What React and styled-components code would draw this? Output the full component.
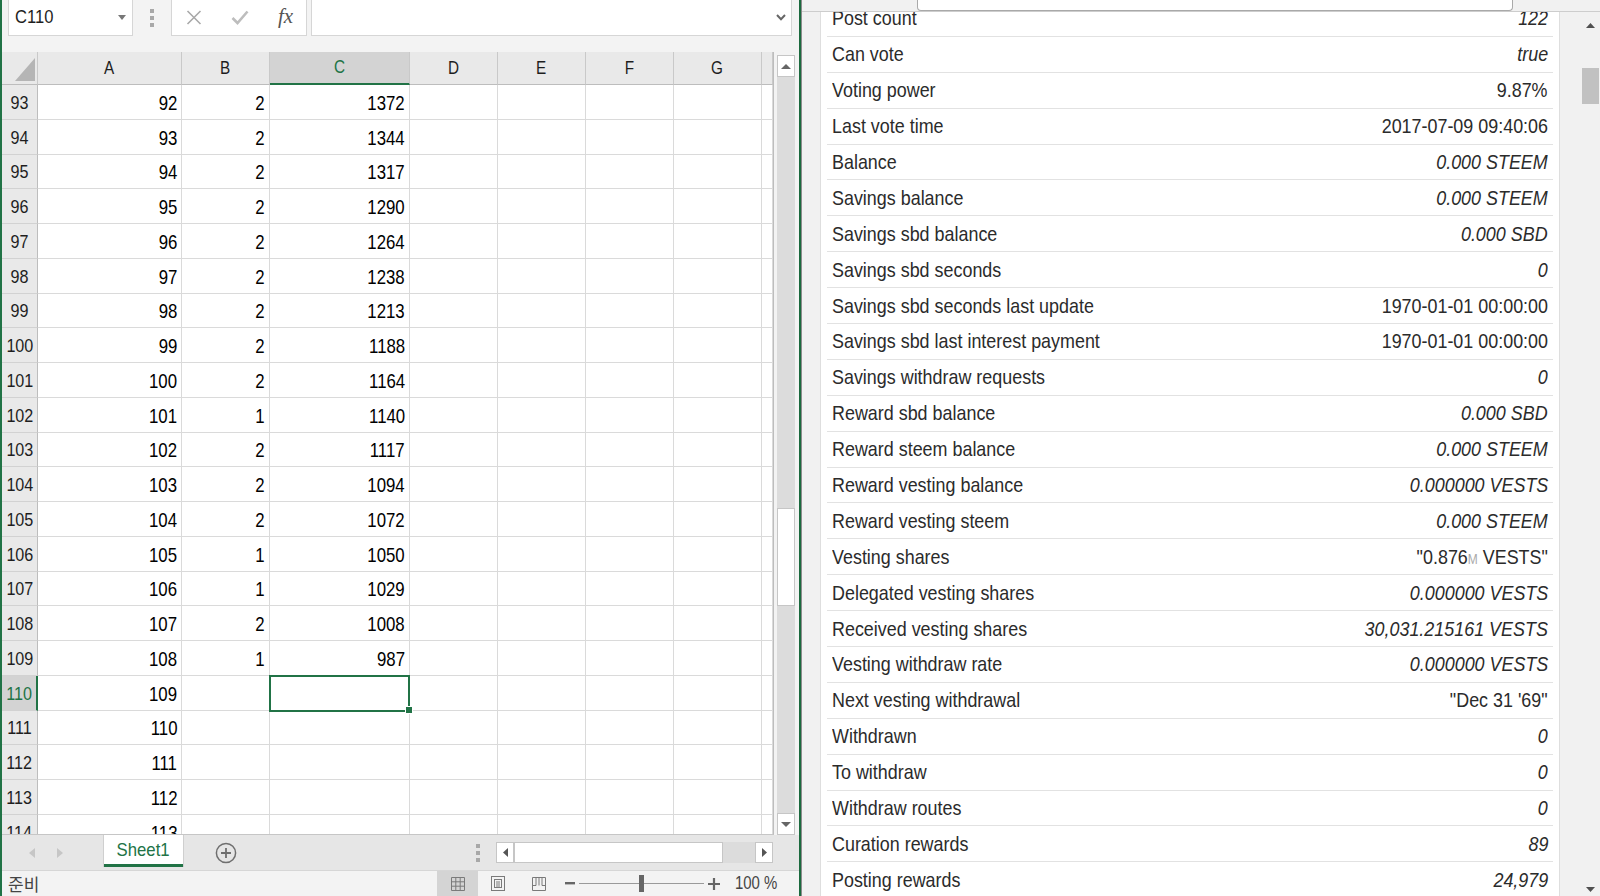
import React, { useLayoutEffect, useRef } from "react";
import styled, { createGlobalStyle, css } from "styled-components";

const GREEN = "#217346";
const SANS = `"Liberation Sans", Arial, sans-serif`;

const GlobalStyle = createGlobalStyle`
  html, body { margin: 0; padding: 0; }
  body { width: 1600px; height: 896px; overflow: hidden; background: #f3f3f3; }
`;

const Screen = styled.div`
  display: flex;
  width: 1600px;
  height: 896px;
  overflow: hidden;
  font-family: ${SANS};
`;

/* the captured screen is horizontally squeezed, so glyphs are narrowed */
const Squeeze = styled.span`
  display: inline-block;
  white-space: nowrap;
  transform: scaleX(${(p) => p.$k || 0.85});
  transform-origin: ${(p) => p.$origin || "center"};
`;

/* ---------- Excel side ---------- */
const Excel = styled.div`
  width: 801px;
  flex: none;
  box-sizing: border-box;
  border-left: 2px solid ${GREEN};
  border-right: 2px solid #1b6a3e;
  display: flex;
  flex-direction: column;
  background: #f3f3f3;
`;

const FormulaBar = styled.div`
  height: 52px;
  flex: none;
  display: flex;
  align-items: flex-start;
  padding-left: 6px;
`;

const Field = styled.div`
  height: 36px;
  box-sizing: border-box;
  background: #fff;
  border: 1px solid #d6d6d6;
  border-top: none;
  display: flex;
  align-items: center;
`;

const NameBox = styled(Field)`
  width: 125px;
  padding: 0 6px;
  justify-content: space-between;
  font-size: 18px;
  color: #1e1e1e;
`;

const Grip = styled.div`
  width: ${(p) => p.$w || 38}px;
  height: ${(p) => p.$h || 36}px;
  display: flex;
  align-items: center;
  justify-content: center;
  flex: none;
`;

const FxBox = styled(Field)`
  width: 136px;
  display: grid;
  grid-template-columns: 44px 47px 45px;
  justify-items: center;
`;

const FxText = styled.span`
  font-family: "Liberation Serif", serif;
  font-style: italic;
  font-size: 21px;
  color: #555;
  line-height: 1;
  margin-top: -2px;
`;

const FormulaInput = styled(Field)`
  width: 481px;
  margin-left: 4px;
  justify-content: flex-end;
  padding-right: 5px;
`;

const MainRow = styled.div`
  flex: 1;
  display: flex;
  min-height: 0;
`;

const Sheet = styled.div`
  width: 772px;
  flex: none;
  box-sizing: border-box;
  border-right: 1px solid #bdbdbd;
  border-bottom: 1px solid #c6c6c6;
  display: flex;
  flex-direction: column;
  background: #fff;
  overflow: hidden;
`;

const COLS = "36px 144px 88px 140px 88px 88px 88px 88px 1fr";

const HeadRow = styled.div`
  display: grid;
  grid-template-columns: ${COLS};
  height: 33px;
  flex: none;
  background: #e9e9e9;
`;

const ColHead = styled.div`
  box-sizing: border-box;
  border-right: 1px solid #c9c9c9;
  border-bottom: ${(p) => (p.$active ? `2px solid ${GREEN}` : "1px solid #bdbdbd")};
  background: ${(p) => (p.$active ? "#d3d3d3" : "#e9e9e9")};
  color: ${(p) => (p.$active ? GREEN : "#1e1e1e")};
  display: flex;
  align-items: center;
  justify-content: center;
  font-size: 18px;
`;

const Corner = styled(ColHead)`
  align-items: flex-end;
  justify-content: flex-end;
  padding: 0 2px 3px 0;
`;

const Body = styled.div`
  flex: 1;
  display: grid;
  grid-template-columns: ${COLS};
  grid-auto-rows: 34.75px;
  align-content: start;
  overflow: hidden;
`;

const RowHead = styled.div`
  box-sizing: border-box;
  border-right: ${(p) => (p.$active ? `2px solid ${GREEN}` : "1px solid #bdbdbd")};
  border-bottom: 1px solid #d2d2d2;
  background: ${(p) => (p.$active ? "#d3d3d3" : "#e9e9e9")};
  color: ${(p) => (p.$active ? GREEN : "#1e1e1e")};
  display: flex;
  align-items: center;
  justify-content: center;
  font-size: 19px;
  padding-top: 2px;
`;

const Cell = styled.div`
  position: relative;
  box-sizing: border-box;
  border-right: 1px solid #dadada;
  border-bottom: 1px solid #dadada;
  display: flex;
  align-items: center;
  justify-content: flex-end;
  padding: 2px 4px 0 0;
  font-size: 21px;
  color: #000;
  ${(p) =>
    p.$selected &&
    css`
      z-index: 1;
      &::after {
        content: "";
        position: absolute;
        left: -1px;
        top: -1px;
        right: -1px;
        bottom: -2px;
        border: 2px solid ${GREEN};
      }
      &::before {
        content: "";
        position: absolute;
        right: -4px;
        bottom: -4px;
        width: 6px;
        height: 6px;
        background: ${GREEN};
        border: 1px solid #fff;
        z-index: 2;
      }
    `}
`;

const VScroll = styled.div`
  width: 25px;
  flex: none;
  box-sizing: border-box;
  padding: 3px 4px 0 3px;
  display: flex;
  flex-direction: column;
`;

const ScrollBtn = styled.div`
  flex: none;
  width: ${(p) => p.$w || 18}px;
  height: ${(p) => p.$h || 22}px;
  box-sizing: border-box;
  background: #fff;
  border: 1px solid #c6c6c6;
  display: flex;
  align-items: center;
  justify-content: center;
`;

const VTrack = styled.div`
  flex: 1;
  background: #dcdcdc;
`;

const VThumb = styled.div`
  height: 98px;
  box-sizing: border-box;
  background: #fff;
  border: 1px solid #c6c6c6;
`;

const TabBar = styled.div`
  height: 35px;
  flex: none;
  display: flex;
  align-items: center;
  background: #e6e6e6;
`;

const TabNav = styled.div`
  width: 102px;
  flex: none;
  display: flex;
  align-items: center;
  padding-left: 27px;
  gap: 22px;
  box-sizing: border-box;
`;

const Tab = styled.div`
  width: 79px;
  height: 32px;
  flex: none;
  align-self: flex-start;
  box-sizing: border-box;
  background: #fff;
  border-bottom: 3px solid ${GREEN};
  box-shadow: -1px 0 0 #cfcfcf, 1px 0 0 #cfcfcf;
  color: ${GREEN};
  font-size: 19px;
  display: flex;
  align-items: center;
  justify-content: center;
  padding-top: 1px;
`;

const AddArea = styled.div`
  width: 86px;
  flex: none;
  display: flex;
  justify-content: center;
`;

const Spacer = styled.div`
  flex: 1;
`;

const HScroll = styled.div`
  width: 277px;
  height: 21px;
  flex: none;
  margin: 0 26px 0 9px;
  display: flex;
  background: #dcdcdc;
`;

const HThumb = styled.div`
  width: 209px;
  flex: none;
  box-sizing: border-box;
  background: #fff;
  border: 1px solid #c6c6c6;
  margin-right: auto;
`;

const StatusBar = styled.div`
  height: 26px;
  flex: none;
  box-sizing: border-box;
  border-top: 1px solid #d6d6d6;
  display: flex;
  align-items: stretch;
  background: #f3f3f3;
  padding-right: 22px;
  font-size: 18px;
  color: #444;
`;

const Ready = styled.div`
  padding-left: 6px;
  display: flex;
  align-items: center;
  font-family: "Noto Sans CJK KR", "Noto Sans", sans-serif;
  font-size: 17px;
  color: #444;
  margin-right: auto;
`;

const ViewBtn = styled.div`
  width: ${(p) => p.$w}px;
  flex: none;
  display: flex;
  align-items: center;
  justify-content: center;
  background: ${(p) => (p.$active ? "#d4d4d4" : "transparent")};
`;

const ZoomSlider = styled.div`
  display: flex;
  align-items: center;
  gap: 4px;
  margin-left: 6px;
`;

const SliderLine = styled.div`
  position: relative;
  width: 125px;
  height: 1px;
  background: #9a9a9a;
`;

const SliderKnob = styled.div`
  position: absolute;
  left: 60px;
  top: -8px;
  width: 5px;
  height: 17px;
  background: #666;
`;

const ZoomText = styled.div`
  width: 42px;
  margin-left: 15px;
  display: flex;
  align-items: center;
  white-space: nowrap;
  color: #444;
`;

/* ---------- Browser side ---------- */
const Browser = styled.div`
  flex: 1;
  display: flex;
  flex-direction: column;
  border-left: 1px solid #8c8c8c;
  background: #f1f1f1;
  color: #2b2b2b;
`;

const TopBar = styled.div`
  height: 12px;
  flex: none;
  box-sizing: border-box;
  border-bottom: 1px solid #cdcdcd;
  display: flex;
`;

const AddressField = styled.div`
  width: 596px;
  height: 11px;
  margin-left: 115px;
  box-sizing: border-box;
  background: #fff;
  border: 1px solid #a9a9a9;
  border-top: none;
  border-radius: 0 0 4px 4px;
`;

const BrowserBody = styled.div`
  flex: 1;
  display: flex;
  min-height: 0;
`;

const LeftStrip = styled.div`
  width: 19px;
  flex: none;
  box-sizing: border-box;
  border-right: 1px solid #dedede;
`;

const Content = styled.div`
  flex: 1;
  background: #fff;
  overflow: hidden;
  padding: 0 6px;
`;

const InfoRow = styled.div`
  height: 35.9px;
  box-sizing: border-box;
  border-top: 1px solid #e2e2e2;
  padding: 0 5px;
  display: flex;
  align-items: center;
  justify-content: space-between;
  font-size: 21px;
  white-space: nowrap;
`;

const Value = styled(Squeeze)`
  font-style: ${(p) => (p.$italic ? "italic" : "normal")};
`;

const Unit = styled.span`
  font-size: 14px;
  color: #aaa;
`;

const RightBar = styled.div`
  width: 41px;
  flex: none;
  box-sizing: border-box;
  border-left: 1px solid #dedede;
  display: flex;
  justify-content: flex-end;
`;

const PageScroll = styled.div`
  width: 20px;
  display: flex;
  flex-direction: column;
  align-items: center;
  padding: 0 1px;
  box-sizing: border-box;
`;

const PageArrow = styled.div`
  height: ${(p) => p.$h}px;
  flex: none;
  display: flex;
  align-items: center;
  justify-content: center;
`;

const PageThumb = styled.div`
  width: 17px;
  height: 36px;
  margin-top: 29px;
  background: #c1c1c1;
`;

/* ---------- icons ---------- */
const Tri = ({ dir = "down", w = 8, h = 5, color = "#666" }) => {
  const pts = {
    down: `0,0 ${w},0 ${w / 2},${h}`,
    up: `0,${h} ${w},${h} ${w / 2},0`,
    left: `${w},0 ${w},${h} 0,${h / 2}`,
    right: `0,0 0,${h} ${w},${h / 2}`,
  }[dir];
  return (
    <svg width={w} height={h} viewBox={`0 0 ${w} ${h}`}>
      <polygon points={pts} fill={color} />
    </svg>
  );
};

const Dots = () => (
  <svg width="4" height="18" viewBox="0 0 4 18">
    <rect x="0" y="0" width="4" height="4" fill="#a8a8a8" />
    <rect x="0" y="7" width="4" height="4" fill="#a8a8a8" />
    <rect x="0" y="14" width="4" height="4" fill="#a8a8a8" />
  </svg>
);

const rows = [];
const bCol = [2, 2, 2, 2, 2, 2, 2, 2, 2, 1, 2, 2, 2, 1, 1, 2, 1];
const cCol = [1372, 1344, 1317, 1290, 1264, 1238, 1213, 1188, 1164, 1140, 1117, 1094, 1072, 1050, 1029, 1008, 987];
for (let r = 93; r <= 114; r++) {
  const i = r - 93;
  rows.push({ n: r, a: r - 1, b: bCol[i] ?? "", c: cCol[i] ?? "" });
}

const info = [
  ["Post count", "122", true],
  ["Can vote", "true", true],
  ["Voting power", "9.87%", false],
  ["Last vote time", "2017-07-09 09:40:06", false],
  ["Balance", "0.000 STEEM", true],
  ["Savings balance", "0.000 STEEM", true],
  ["Savings sbd balance", "0.000 SBD", true],
  ["Savings sbd seconds", "0", true],
  ["Savings sbd seconds last update", "1970-01-01 00:00:00", false],
  ["Savings sbd last interest payment", "1970-01-01 00:00:00", false],
  ["Savings withdraw requests", "0", true],
  ["Reward sbd balance", "0.000 SBD", true],
  ["Reward steem balance", "0.000 STEEM", true],
  ["Reward vesting balance", "0.000000 VESTS", true],
  ["Reward vesting steem", "0.000 STEEM", true],
  ["Vesting shares", "vests", false],
  ["Delegated vesting shares", "0.000000 VESTS", true],
  ["Received vesting shares", "30,031.215161 VESTS", true],
  ["Vesting withdraw rate", "0.000000 VESTS", true],
  ["Next vesting withdrawal", "\"Dec 31 '69\"", false],
  ["Withdrawn", "0", true],
  ["To withdraw", "0", true],
  ["Withdraw routes", "0", true],
  ["Curation rewards", "89", true],
  ["Posting rewards", "24,979", true],
];

const letters = ["A", "B", "C", "D", "E", "F", "G", ""];

const Num = ({ children }) => (
  <Squeeze $k={0.8} $origin="right">
    {children}
  </Squeeze>
);

export default function App() {
  const listRef = useRef(null);
  useLayoutEffect(() => {
    if (listRef.current) listRef.current.scrollTop = 12;
  }, []);

  return (
    <Screen>
      <GlobalStyle />
      <Excel>
        <FormulaBar>
          <NameBox>
            <Squeeze $k={0.92} $origin="left">C110</Squeeze>
            <Tri w={8} h={5} color="#777" />
          </NameBox>
          <Grip>
            <Dots />
          </Grip>
          <FxBox>
            <svg width="16" height="15" viewBox="0 0 16 15">
              <path d="M1.5 1 L14.5 14 M14.5 1 L1.5 14" stroke="#a9a9a9" strokeWidth="1.6" />
            </svg>
            <svg width="18" height="15" viewBox="0 0 18 15">
              <path d="M1.5 8 L6.5 13 L16.5 1.5" stroke="#bdbdbd" strokeWidth="2.6" fill="none" />
            </svg>
            <FxText>fx</FxText>
          </FxBox>
          <FormulaInput>
            <svg width="10" height="7" viewBox="0 0 10 7">
              <path d="M1 1 L5 5.2 L9 1" stroke="#666" strokeWidth="2" fill="none" />
            </svg>
          </FormulaInput>
        </FormulaBar>

        <MainRow>
          <Sheet>
            <HeadRow>
              <Corner>
                <svg width="20" height="23" viewBox="0 0 20 23">
                  <polygon points="20,0 20,23 0,23" fill="#b5b5b5" />
                </svg>
              </Corner>
              {letters.map((l, i) => (
                <ColHead key={i} $active={l === "C"}>
                  <Squeeze $k={0.85}>{l}</Squeeze>
                </ColHead>
              ))}
            </HeadRow>
            <Body>
              {rows.map((r) => (
                <React.Fragment key={r.n}>
                  <RowHead $active={r.n === 110}>
                    <Squeeze $k={0.85}>{r.n}</Squeeze>
                  </RowHead>
                  <Cell>
                    <Num>{r.a}</Num>
                  </Cell>
                  <Cell>
                    <Num>{r.b}</Num>
                  </Cell>
                  <Cell $selected={r.n === 110}>
                    <Num>{r.c}</Num>
                  </Cell>
                  <Cell />
                  <Cell />
                  <Cell />
                  <Cell />
                  <Cell />
                </React.Fragment>
              ))}
            </Body>
          </Sheet>
          <VScroll>
            <ScrollBtn>
              <Tri dir="up" w={10} h={5} color="#666" />
            </ScrollBtn>
            <VTrack>
              <VThumb style={{ marginTop: 431 }} />
            </VTrack>
            <ScrollBtn>
              <Tri dir="down" w={10} h={5} color="#666" />
            </ScrollBtn>
          </VScroll>
        </MainRow>

        <TabBar>
          <TabNav>
            <Tri dir="left" w={6} h={10} color="#c6c6c6" />
            <Tri dir="right" w={6} h={10} color="#c6c6c6" />
          </TabNav>
          <Tab>
            <Squeeze $k={0.88}>Sheet1</Squeeze>
          </Tab>
          <AddArea>
            <svg width="22" height="22" viewBox="0 0 22 22">
              <circle cx="11" cy="11" r="9.6" fill="none" stroke="#6f6f6f" strokeWidth="1.5" />
              <path d="M6 11 H16 M11 6 V16" stroke="#6f6f6f" strokeWidth="1.8" />
            </svg>
          </AddArea>
          <Spacer />
          <Grip $w={18} $h={21}>
            <Dots />
          </Grip>
          <HScroll>
            <ScrollBtn $w={18} $h={21}>
              <Tri dir="left" w={5} h={9} color="#555" />
            </ScrollBtn>
            <HThumb />
            <ScrollBtn $w={18} $h={21}>
              <Tri dir="right" w={5} h={9} color="#555" />
            </ScrollBtn>
          </HScroll>
        </TabBar>

        <StatusBar>
          <Ready>준비</Ready>
          <ViewBtn $w={41} $active>
            <svg width="16" height="16" viewBox="0 0 16 16">
              <path
                d="M1.5 1.5h13v13h-13z M1.5 5.8h13 M1.5 10.2h13 M5.8 1.5v13 M10.2 1.5v13"
                stroke="#7a7a7a"
                fill="none"
              />
            </svg>
          </ViewBtn>
          <ViewBtn $w={40}>
            <svg width="16" height="17" viewBox="0 0 16 17">
              <rect x="1.5" y="1.5" width="13" height="14" fill="none" stroke="#7a7a7a" />
              <rect x="4.5" y="4.5" width="7" height="8" fill="none" stroke="#7a7a7a" />
              <path d="M6 7h4M6 9h4M6 11h4" stroke="#7a7a7a" />
            </svg>
          </ViewBtn>
          <ViewBtn $w={41}>
            <svg width="16" height="16" viewBox="0 0 16 16">
              <path d="M1.5 1.5h13v13h-13z M8 1.5v8 M1.5 9.5h3.5 M11 9.5h3.5 M5 1.5v8 M11 1.5v8" stroke="#7a7a7a" fill="none" />
            </svg>
          </ViewBtn>
          <ZoomSlider>
            <svg width="10" height="3" viewBox="0 0 10 3">
              <rect width="10" height="2.4" fill="#666" />
            </svg>
            <SliderLine>
              <SliderKnob />
            </SliderLine>
            <svg width="12" height="12" viewBox="0 0 12 12">
              <path d="M0 6 H12 M6 0 V12" stroke="#666" strokeWidth="2.2" />
            </svg>
          </ZoomSlider>
          <ZoomText>
            <Squeeze $k={0.83} $origin="left">100 %</Squeeze>
          </ZoomText>
        </StatusBar>
      </Excel>

      <Browser>
        <TopBar>
          <AddressField />
        </TopBar>
        <BrowserBody>
          <LeftStrip />
          <Content ref={listRef}>
            {info.map(([label, value, italic]) => (
              <InfoRow key={label}>
                <Squeeze $k={0.853} $origin="left">{label}</Squeeze>
                {value === "vests" ? (
                  <Value $k={0.853} $origin="right">
                    "0.876<Unit>M</Unit> VESTS"
                  </Value>
                ) : (
                  <Value $k={0.853} $origin="right" $italic={italic}>
                    {value}
                  </Value>
                )}
              </InfoRow>
            ))}
          </Content>
          <RightBar>
            <PageScroll>
              <PageArrow $h={27}>
                <Tri dir="up" w={9} h={5} color="#505050" />
              </PageArrow>
              <PageThumb />
              <Spacer />
              <PageArrow $h={14}>
                <Tri dir="down" w={9} h={5} color="#505050" />
              </PageArrow>
            </PageScroll>
          </RightBar>
        </BrowserBody>
      </Browser>
    </Screen>
  );
}
